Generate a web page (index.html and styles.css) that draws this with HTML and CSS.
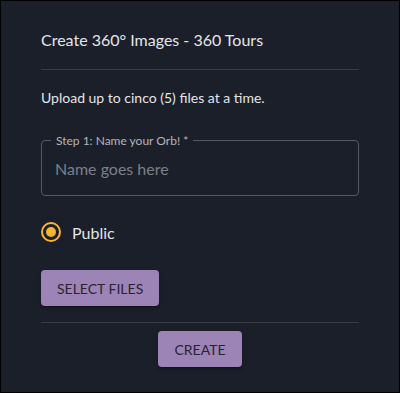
FILE: index.html
```html
<!DOCTYPE html>
<html lang="en">
<head>
    <meta charset="UTF-8">
    <meta name="viewport" content="width=device-width, initial-scale=1.0">
    <title>Create 360 Images</title>
    <link rel="stylesheet" href="styles.css">
</head>
<body>
    <div class="dialog">
        <h2 class="title">Create 360° Images - 360 Tours</h2>
        <hr class="divider">
        <p class="hint">Upload up to cinco (5) files at a time.</p>

        <div class="field">
            <label class="field-label" for="orb-name">Step 1: Name your Orb! *</label>
            <input class="field-input" id="orb-name" type="text" placeholder="Name goes here">
        </div>

        <label class="radio">
            <span class="radio-ring"><span class="radio-dot"></span></span>
            <span class="radio-text">Public</span>
        </label>

        <div class="upload">
            <button class="btn" type="button">Select files</button>
        </div>

        <hr class="divider">
        <div class="actions">
            <button class="btn" type="button">Create</button>
        </div>
    </div>
</body>
</html>
```

FILE: styles.css
```css
* {
    box-sizing: border-box;
}
html, body {
    margin: 0;
    height: 100%;
}
body {
    font-family: Lato, "Noto Sans", Arial, sans-serif;
    color: #e4e5e8;
    background-color: #1b1f2a;
    border: 1px solid #000;
}
.dialog {
    padding: 27px 40px 0;
}
.title {
    margin: 0;
    font-size: 16px;
    font-weight: 400;
    line-height: 24px;
}
.divider {
    margin: 17px 0 0;
    border: none;
    border-top: 1px solid #3a3e49;
}
.hint {
    margin: 18px 0 0;
    font-size: 14px;
    line-height: 20px;
}
.field {
    position: relative;
    margin-top: 32px;
    height: 56px;
    border: 1px solid #555967;
    border-radius: 4px;
    display: flex;
    align-items: center;
}
.field-label {
    position: absolute;
    top: -8px;
    left: 9px;
    padding: 0 5px;
    font-size: 12px;
    line-height: 16px;
    color: #b3b5bc;
    background-color: #1b1f2a;
}
.field-input {
    width: 100%;
    padding: 0 13px;
    border: none;
    outline: none;
    background: transparent;
    font-family: inherit;
    font-size: 16px;
    color: #e4e5e8;
}
.field-input::placeholder {
    color: #7c7f88;
}
.radio {
    display: flex;
    align-items: center;
    margin-top: 25px;
    height: 22px;
}
.radio-ring {
    width: 20px;
    height: 20px;
    border: 2px solid #f5b731;
    border-radius: 50%;
    display: flex;
    align-items: center;
    justify-content: center;
}
.radio-dot {
    width: 10px;
    height: 10px;
    border-radius: 50%;
    background-color: #f5b731;
}
.radio-text {
    margin-left: 11px;
    font-size: 16px;
}
.upload {
    margin-top: 27px;
}
.btn {
    height: 36px;
    padding: 0 16px;
    border: none;
    border-radius: 4px;
    background-color: #9c84b6;
    color: #2a2232;
    font-family: inherit;
    font-size: 14px;
    text-transform: uppercase;
    box-shadow: 0 3px 1px -2px rgba(0,0,0,0.2), 0 2px 2px 0 rgba(0,0,0,0.14), 0 1px 5px 0 rgba(0,0,0,0.12);
}
.upload + .divider {
    margin-top: 16px;
}
.actions {
    margin-top: 8px;
    display: flex;
    justify-content: center;
}
```
